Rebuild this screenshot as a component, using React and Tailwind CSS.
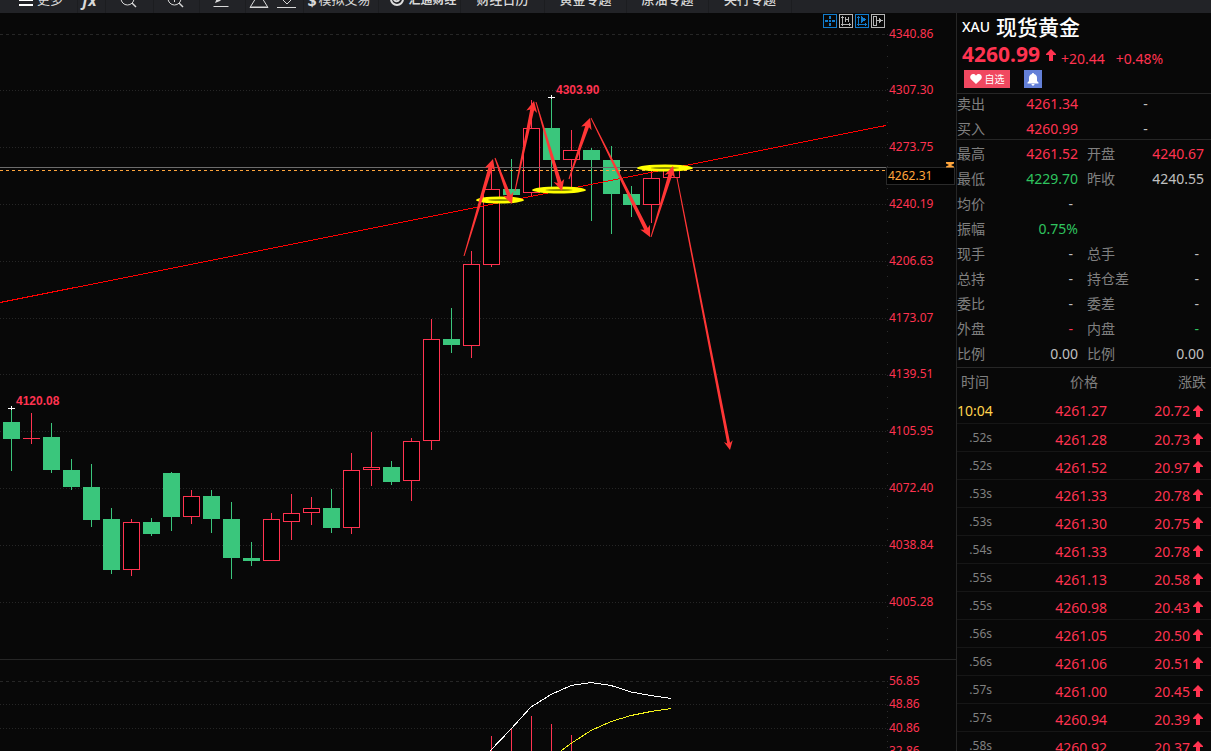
const RED = '#ff3350';
const GREEN = '#3ac67c';

// x centre, high, body top, body bottom, low, direction
const candles = [
  [11, 408, 422, 439, 471, 'down'],
  [31, 413, 438, 439, 444, 'up'],
  [51, 423, 437, 470, 473, 'down'],
  [71, 459, 470, 487, 490, 'down'],
  [91, 464, 487, 520, 527, 'down'],
  [111, 508, 519, 570, 574, 'down'],
  [131, 519, 522, 570, 576, 'up'],
  [151, 518, 522, 534, 536, 'down'],
  [171, 472, 473, 517, 531, 'down'],
  [191, 490, 496, 517, 524, 'up'],
  [211, 490, 496, 519, 533, 'down'],
  [231, 502, 519, 558, 579, 'down'],
  [251, 542, 558, 561, 566, 'down'],
  [271, 513, 519, 561, 561, 'up'],
  [291, 494, 513, 522, 540, 'up'],
  [311, 497, 508, 513, 525, 'up'],
  [331, 489, 508, 528, 533, 'down'],
  [351, 453, 470, 528, 534, 'up'],
  [371, 432, 467, 470, 486, 'up'],
  [391, 461, 467, 482, 485, 'down'],
  [411, 438, 441, 481, 501, 'up'],
  [431, 319, 339, 441, 450, 'up'],
  [451, 308, 339, 345, 353, 'down'],
  [471, 251, 264, 346, 358, 'up'],
  [491, 163, 189, 265, 267, 'up'],
  [511, 159, 189, 195, 197, 'down'],
  [531, 100, 128, 193, 196, 'up'],
  [551, 97, 128, 160, 190, 'down'],
  [571, 130, 150, 160, 188, 'up'],
  [591, 148, 150, 160, 221, 'down'],
  [611, 146, 160, 194, 234, 'down'],
  [631, 186, 194, 205, 217, 'down'],
  [651, 171, 178, 205, 223, 'up'],
  [671, 168, 169, 178, 178, 'up'],
];

const priceTicks = [
  [34, '4340.86'],
  [90, '4307.30'],
  [147, '4273.75'],
  [204, '4240.19'],
  [261, '4206.63'],
  [318, '4173.07'],
  [374, '4139.51'],
  [431, '4105.95'],
  [488, '4072.40'],
  [545, '4038.84'],
  [602, '4005.28'],
];

const macdTicks = [
  [681, '56.85'],
  [704, '48.86'],
  [728, '40.86'],
  [751, '32.86'],
];

const macdBars = [
  [491, 736],
  [511, 728],
  [531, 716],
  [551, 724],
  [571, 735],
];

// tail x/y, tip x/y, thickness
const arrows = [
  [464, 256, 493, 159, 4],
  [495, 158, 512, 204, 4],
  [515, 191, 534, 101, 4],
  [536, 102, 562, 191, 4],
  [569, 179, 590, 118, 4],
  [591, 118, 650, 237, 4],
  [651, 237, 673, 166, 4],
  [677, 178, 730, 450, 3],
];

const ellipses = [
  [500, 200, 24],
  [559, 190, 27],
  [665, 168, 28],
];

const quotes = [
  ['最高', '4261.52', 'red', '开盘', '4240.67', 'red'],
  ['最低', '4229.70', 'green', '昨收', '4240.55', 'grey'],
  ['均价', '-', 'grey'],
  ['振幅', '0.75%', 'green'],
  ['现手', '-', 'grey', '总手', '-', 'grey'],
  ['总持', '-', 'grey', '持仓差', '-', 'grey'],
  ['委比', '-', 'grey', '委差', '-', 'grey'],
  ['外盘', '-', 'red', '内盘', '-', 'green'],
  ['比例', '0.00', 'grey', '比例', '0.00', 'grey'],
];

const tones = {
  red: 'text-[#ff3350]',
  green: 'text-[#2fc45f]',
  grey: 'text-[#c0c0c0]',
};

const trades = [
  ['10:04', '4261.27', '20.72'],
  ['.52s', '4261.28', '20.73'],
  ['.52s', '4261.52', '20.97'],
  ['.53s', '4261.33', '20.78'],
  ['.53s', '4261.30', '20.75'],
  ['.54s', '4261.33', '20.78'],
  ['.55s', '4261.13', '20.58'],
  ['.55s', '4260.98', '20.43'],
  ['.56s', '4261.05', '20.50'],
  ['.56s', '4261.06', '20.51'],
  ['.57s', '4261.00', '20.45'],
  ['.57s', '4260.94', '20.39'],
  ['.58s', '4260.92', '20.37'],
];

function Candle({ x, high, top, bottom, low, dir }) {
  const color = dir === 'up' ? RED : GREEN;
  const h = bottom - top;
  return (
    <g shapeRendering="crispEdges">
      <rect x={x} y={high} width="1" height={low - high} fill={color} />
      {dir === 'up' && h > 1 ? (
        <rect x={x - 7.5} y={top + 0.5} width="16" height={h - 1} fill="#000" stroke={color} />
      ) : (
        <rect x={x - 8} y={top} width="17" height={h} fill={color} />
      )}
    </g>
  );
}

// Hand-drawn style arrow that grows from a hairline tail to a wide head
function Arrow({ x1, y1, x2, y2, w }) {
  const len = Math.hypot(x2 - x1, y2 - y1);
  const ux = (x2 - x1) / len;
  const uy = (y2 - y1) / len;
  const at = (along, side) =>
    `${(x1 + ux * along - uy * side).toFixed(1)},${(y1 + uy * along + ux * side).toFixed(1)}`;
  const head = w * 2 + 3;
  const points = [
    at(0, -0.5),
    at(len - head + 2, -w / 2),
    at(len - head, -w - 1.5),
    at(len, 0),
    at(len - head, w + 1.5),
    at(len - head + 2, w / 2),
    at(0, 0.5),
  ];
  return <polygon points={points.join(' ')} fill="#ff3636" />;
}

function GridLine({ y, dashed }) {
  return (
    <line
      x1="0"
      x2="886"
      y1={y + 0.5}
      y2={y + 0.5}
      stroke="#262626"
      strokeDasharray={dashed ? '3 3' : '1 2'}
      shapeRendering="crispEdges"
    />
  );
}

function PeakMark({ x, y, label }) {
  return (
    <g>
      <path d={`M${x - 3} ${y + 0.5}h7M${x + 0.5} ${y - 2}v4`} stroke="#fff" shapeRendering="crispEdges" />
      <text x={x + 5} y={y - 3} fill={RED} className="font-['Liberation_Sans'] text-[12px] font-bold">
        {label}
      </text>
    </g>
  );
}

function PriceChart() {
  return (
    <svg className="block h-[646px] w-full shrink-0" role="img" aria-label="现货黄金 K线图">
      <g transform="translate(0 -13)">
        {priceTicks.map(([y], i) => (
          <GridLine key={y} y={y} dashed={i === 0} />
        ))}
        <path d="M887.5 34V659" stroke="#2c2c2c" strokeDasharray="1 10" shapeRendering="crispEdges" />
        {candles.map(([x, high, top, bottom, low, dir]) => (
          <Candle key={x} x={x} high={high} top={top} bottom={bottom} low={low} dir={dir} />
        ))}
        <path d="M0 302.5L886 125.5" stroke="#f00" shapeRendering="crispEdges" />
        <path d="M0 167.5H886" stroke="#6c6c6c" shapeRendering="crispEdges" />
        <path d="M0 170.5H886" stroke="#ffa53c" strokeDasharray="3 3" shapeRendering="crispEdges" />
        <PeakMark x={11} y={408} label="4120.08" />
        <PeakMark x={551} y={97} label="4303.90" />
        {ellipses.map(([cx, cy, rx]) => (
          <g key={cx}>
            <ellipse cx={cx} cy={cy} rx={rx} ry="3.4" fill="#ff0" />
            <ellipse cx={cx} cy={cy} rx={rx / 2} ry="0.9" fill="#8a8a00" />
          </g>
        ))}
        {arrows.map(([x1, y1, x2, y2, w]) => (
          <Arrow key={x1} x1={x1} y1={y1} x2={x2} y2={y2} w={w} />
        ))}
        {priceTicks.map(([y, label]) => (
          <text key={y} x="889" y={y + 4} fill={RED} className="text-[12px]">
            {label}
          </text>
        ))}
        <rect x="886.5" y="167.5" width="68" height="17" fill="#000" stroke="#2a2a2a" />
        <text x="888" y="180" fill="#ffa53c" className="text-[12px]">
          4262.31
        </text>
        <path d="M946 162h8v1.5l-3 1.5 3 1.5v1h-8v-1l3-1.5-3-1.5z" fill="#ffa53c" />
      </g>
    </svg>
  );
}

function MacdChart() {
  return (
    <svg className="block min-h-0 w-full flex-1" role="img" aria-label="MACD">
      <g transform="translate(0 -660)">
        {macdTicks.map(([y], i) => (
          <GridLine key={y} y={y} dashed={i === 0} />
        ))}
        <path d="M887.5 681V760" stroke="#2c2c2c" strokeDasharray="1 5" shapeRendering="crispEdges" />
        {macdBars.map(([x, y]) => (
          <rect key={x} x={x} y={y} width="1" height={760 - y} fill={RED} />
        ))}
        <polyline
          points="481,761 490,751 511,729 531,707 551,694.5 571,685.5 591,682.5 611,685.5 631,692 651,695.5 671,698.5"
          fill="none"
          stroke="#fff"
          shapeRendering="crispEdges"
        />
        <polyline
          points="551,758 561,751 571,743.5 591,730.5 611,721.5 631,715.5 651,711.5 671,708.5"
          fill="none"
          stroke="#f2f21c"
          shapeRendering="crispEdges"
        />
        {macdTicks.map(([y, label]) => (
          <text key={y} x="889" y={y + 4} fill={RED} className="text-[12px]">
            {label}
          </text>
        ))}
      </g>
    </svg>
  );
}

function ToolIcon({ children }) {
  return (
    <svg width="20" height="20" viewBox="0 0 20 20" fill="none" stroke="currentColor" className="shrink-0">
      {children}
    </svg>
  );
}

function Toolbar() {
  const cell = 'flex h-[26px] shrink-0 items-center justify-center whitespace-nowrap border-r border-[#1c1d20]';
  return (
    <header className="flex h-[13px] shrink-0 items-end overflow-hidden bg-[#222327] pl-[5px] text-[13px] text-[#d8d8d8]">
      <button className={`${cell} w-[73px] gap-1`}>
        <svg width="14" height="14" viewBox="0 0 14 14" fill="#fff">
          <path d="M0 1h14v2H0zM0 6h14v2H0zM0 11h14v2H0z" />
        </svg>
        更多
      </button>
      <button className={`${cell} w-7 pr-1 font-['Open_Sans'] text-base font-bold italic`}>fx</button>
      <button className={`${cell} w-12 pr-1`} aria-label="缩小">
        <ToolIcon>
          <circle cx="9.5" cy="8.5" r="6.500" />
          <path d="M14 13l4 4" strokeWidth="1.5" />
        </ToolIcon>
      </button>
      <button className={`${cell} w-[46px] pr-1`} aria-label="放大">
        <ToolIcon>
          <circle cx="9.5" cy="8.5" r="6.500" />
          <path d="M14 13l4 4" strokeWidth="1.5" />
          <path d="M9.5 5v7M6 8.500h7" />
        </ToolIcon>
      </button>
      <button className={`${cell} w-[46px] pr-1`} aria-label="画线">
        <ToolIcon>
          <path d="M4 13l2-5 8-8 3 3-8 8z" fill="currentColor" stroke="none" />
          <path d="M2.5 16.500h15" />
        </ToolIcon>
      </button>
      <div className={`${cell} w-[58px] gap-2 pr-1`}>
        <button aria-label="上移">
          <ToolIcon>
            <path d="M10 3L1 17.500h18z" />
            <path d="M2 17h16" />
          </ToolIcon>
        </button>
        <button aria-label="下移">
          <ToolIcon>
            <path d="M0 17.500h19M6 10l4 4 4-4" />
          </ToolIcon>
        </button>
      </div>
      <button className={`${cell} w-[75px] gap-[2px] pr-1`}>
        <b className="w-[9px] font-['Open_Sans'] text-base">$</b>
        模拟交易
      </button>
      <a href="#fx678" className={`${cell} w-[82px] gap-1 pl-2 text-[12px] font-bold`}>
        <svg width="14" height="14" viewBox="0 0 14 14" fill="none" stroke="#ddd" strokeWidth="2">
          <circle cx="7" cy="6" r="6" />
          <path d="M3 4c1 5 5 6 7 1" />
        </svg>
        汇通财经
      </a>
      <a href="#calendar" className={`${cell} w-[84px] font-medium`}>财经日历</a>
      <a href="#gold" className={`${cell} w-[82px] font-medium`}>黄金专题</a>
      <a href="#oil" className={`${cell} w-[82px] font-medium`}>原油专题</a>
      <a href="#bank" className={`${cell} w-[83px] font-medium`}>央行专题</a>
    </header>
  );
}

function ChartTools() {
  const box = 'size-[14px] border';
  return (
    <div className="absolute right-[71px] top-px flex gap-[2px]">
      <button aria-label="十字光标" className={`${box} border-[#127ccc] text-[#127ccc]`}>
        <svg viewBox="0 0 12 12" fill="currentColor" shapeRendering="crispEdges">
          <path d="M1 5h3v2H1zM8 5h3v2H8zM5 1h2v3H5zM5 8h2v3H5zM5 5h2v2H5z" />
        </svg>
      </button>
      <button aria-label="纵轴缩放" className={`${box} border-[#b4b4b4] text-[#b4b4b4]`}>
        <svg viewBox="0 0 12 12" fill="none" stroke="currentColor" shapeRendering="crispEdges">
          <path d="M2.5 1v10M1 9.5h10M5.5 2v5M8.500 2v5M5 4.5h4M1 2.5h3M9.500 8v3" />
        </svg>
      </button>
      <button aria-label="播放" className={`${box} border-[#127ccc] text-[#127ccc]`}>
        <svg viewBox="0 0 12 12" fill="none" stroke="currentColor" shapeRendering="crispEdges">
          <path d="M2.5 1v10M1 9.5h10M1 2.5h3M9.5 8v3" />
          <path d="M5 1l5 3.500-5 3.500z" fill="currentColor" stroke="none" />
        </svg>
      </button>
      <button aria-label="移到最新" className={`${box} border-[#b4b4b4] text-[#b4b4b4]`}>
        <svg viewBox="0 0 12 12" fill="none" stroke="currentColor" shapeRendering="crispEdges">
          <path d="M1.5 1.5h3v9h-3zM4 5.500h7M7.500 3v5M8.500 4v3" />
        </svg>
      </button>
    </div>
  );
}

function UpArrow() {
  return (
    <svg width="10" height="12" viewBox="0 0 10 12" fill={RED} className="shrink-0">
      <path d="M5 0l5 5v1H7v6H3V6H0V5z" />
    </svg>
  );
}

function QuoteHeader() {
  return (
    <div className="h-20 shrink-0 pl-[5px] pt-1">
      <h1 className="flex h-5 items-center gap-[6px] text-white">
        <span className="text-[14px] font-medium leading-5">XAU</span>
        <span className="text-[21px] font-medium leading-5">现货黄金</span>
      </h1>
      <div className="mt-1 flex h-7 items-center text-[14px] text-[#ff3350]">
        <span className="text-[21px] font-bold">4260.99</span>
        <span className="ml-[6px]">
          <UpArrow />
        </span>
        <span className="ml-[5px] mt-[6px]">+20.44</span>
        <span className="ml-[11px] mt-[6px]">+0.48%</span>
      </div>
      <div className="mt-px flex gap-[14px] pl-[2px]">
        <button className="flex h-[18px] w-[46px] items-center justify-center gap-[3px] bg-[#f04860] text-[10px] text-white">
          <svg width="12" height="10" viewBox="0 0 12 10" fill="#fff">
            <path d="M6 10L1 5.3C-.8 3 .6 0 3.200 0 4.500 0 5.500.7 6 1.700 6.500.7 7.500 0 8.800 0 11.400 0 12.800 3 11 5.300z" />
          </svg>
          自选
        </button>
        <button aria-label="价格提醒" className="flex size-[18px] items-center justify-center bg-[#6480d8]">
          <svg width="12" height="13" viewBox="0 0 12 13" fill="#fff">
            <path d="M6 0c.7 0 1 .5 1 1 2 .5 3 2 3 4v3l1.500 1.500v1H.500v-1L2 8V5c0-2 1-3.500 3-4 0-.5.3-1 1-1zM4.500 11h3c0 1-.6 1.700-1.500 1.700S4.500 12 4.500 11z" />
          </svg>
        </button>
      </div>
    </div>
  );
}

function Quote({ label, value, tone }) {
  return (
    <div className="flex h-5 items-center justify-between">
      <dt className="text-[#808080]">{label}</dt>
      <dd className={`${tones[tone]} ${value === '-' ? 'pr-[5px]' : ''}`}>{value}</dd>
    </div>
  );
}

function QuotePanel() {
  const grid =
    'grid shrink-0 grid-cols-[121px_1fr] gap-x-[9px] gap-y-[5px] border-t border-[#262626] pr-[7px] text-[14px] leading-5';
  return (
    <aside className="flex w-[255px] shrink-0 flex-col overflow-hidden border-l border-[#262626]">
      <QuoteHeader />
      <dl className={grid}>
        <Quote label="卖出" value="4261.34" tone="red" />
        <dd className="h-5 text-center text-[#c0c0c0]">-</dd>
        <Quote label="买入" value="4260.99" tone="red" />
        <dd className="h-5 text-center text-[#c0c0c0]">-</dd>
      </dl>
      <dl className={`${grid} pb-[3px] pt-1`}>
        {quotes.map(([label, value, tone, label2, value2, tone2], i) => [
          <Quote key={`a${i}`} label={label} value={value} tone={tone} />,
          label2 ? <Quote key={`b${i}`} label={label2} value={value2} tone={tone2} /> : <div key={`b${i}`} />,
        ])}
      </dl>
      <table className="w-full table-fixed border-collapse border-t border-[#262626] text-[14px]">
        <thead>
          <tr className="h-7 text-[#808080]">
            <th className="w-[35px] whitespace-nowrap pr-[3px] text-right font-normal">时间</th>
            <th className="w-[115px] pr-[9px] text-right font-normal">价格</th>
            <th className="pr-[5px] text-right font-normal">涨跌</th>
          </tr>
        </thead>
        <tbody>
          {trades.map(([time, price, change], i) => (
            <tr key={i} className="h-7 border-b border-[#161616] text-[#ff3350]">
              <td
                className={
                  time.includes(':')
                    ? 'pt-[3px] text-right text-[#ffd24d]'
                    : 'text-right text-[12px] text-[#808080]'
                }
              >
                {time}
              </td>
              <td className="pt-[3px] text-right">{price}</td>
              <td className="pr-2 pt-[3px]">
                <span className="flex items-center justify-end gap-[3px]">
                  {change}
                  <UpArrow />
                </span>
              </td>
            </tr>
          ))}
        </tbody>
      </table>
    </aside>
  );
}

export default function App() {
  return (
    <div className="flex h-screen flex-col overflow-hidden bg-[#080808] font-['Noto_Sans','Noto_Sans_CJK_SC',sans-serif]">
      <Toolbar />
      <main className="flex min-h-0 flex-1">
        <section className="relative flex min-w-0 flex-1 flex-col overflow-hidden">
          <PriceChart />
          <div className="h-px shrink-0 bg-[#262626]" />
          <MacdChart />
          <ChartTools />
        </section>
        <QuotePanel />
      </main>
    </div>
  );
}
